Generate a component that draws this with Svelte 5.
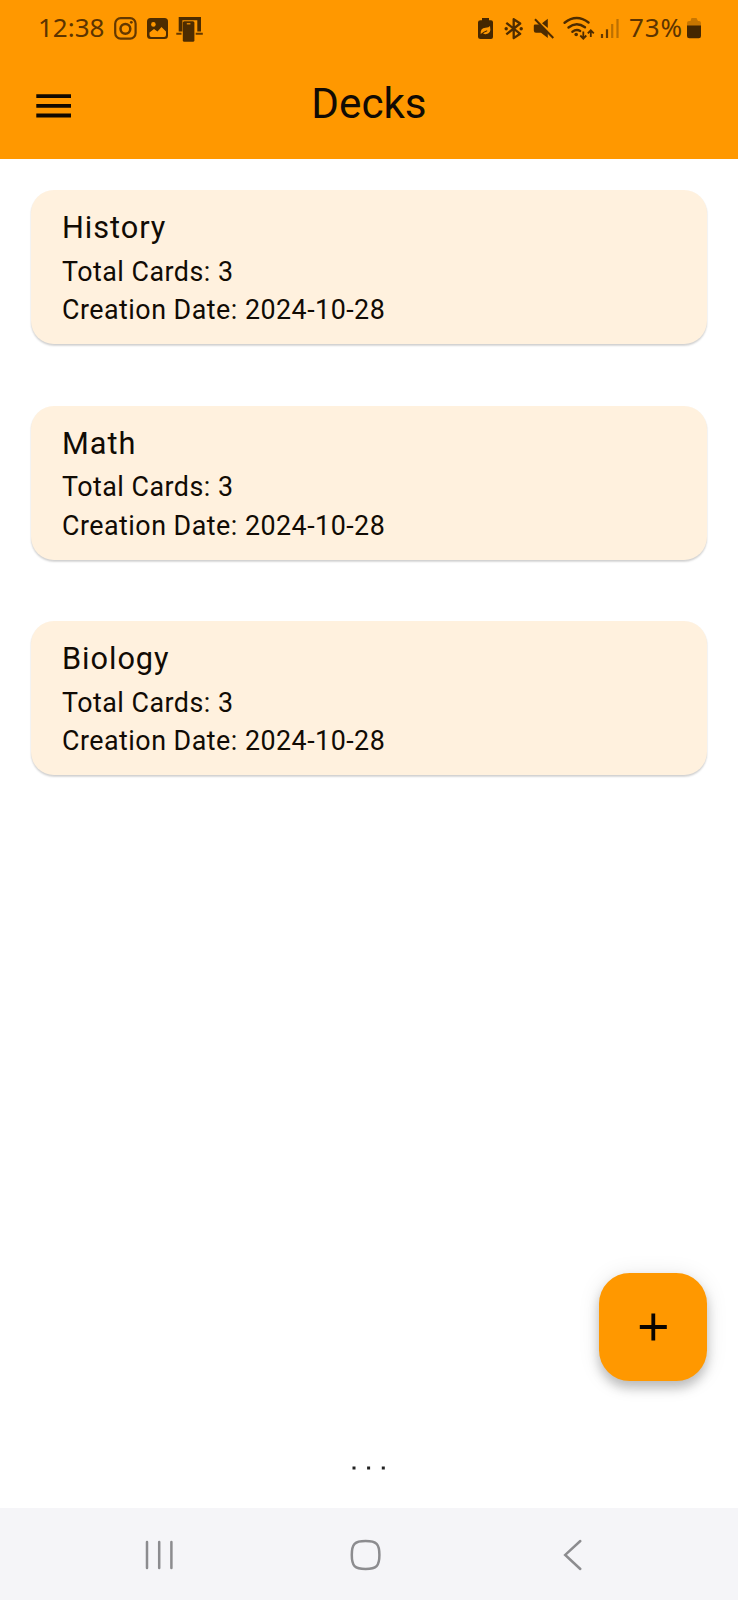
<script>
  const decks = [
    { name: 'History', total: 3, created: '2024-10-28' },
    { name: 'Math', total: 3, created: '2024-10-28' },
    { name: 'Biology', total: 3, created: '2024-10-28' }
  ];
</script>

<div class="screen">
  <header>
    <div class="status">
      <span class="clock">12:38</span>
      <svg class="notifications" width="92" height="28" viewBox="112 14 92 28" aria-hidden="true">
        <g fill="none" stroke="#633800" stroke-width="2.2">
          <rect x="115.2" y="18.2" width="20.4" height="20.4" rx="5.5" />
          <circle cx="125.4" cy="28.8" r="4.9" stroke-width="2.5" />
        </g>
        <circle cx="131.3" cy="22.3" r="1.4" fill="#633800" />
        <rect x="147" y="18" width="21" height="21" rx="3.5" fill="#4d2c00" />
        <circle cx="153.4" cy="24.4" r="2.3" fill="#ff9800" />
        <path d="M149.5 32.5 L154 29 L157.5 31.5 L161.5 27 L166 31.5 V35 Q166 37 164 37 H151.5 Q149.5 37 149.5 35Z" fill="#ff9800" />
        <path d="M178.7 17 H201 V31.5 H197.3 V20.2 H182.4 V31.5 H178.7Z" fill="#4d2c00" />
        <path d="M176.3 33.8 H181.5 M195.7 33.8 H202.8" stroke="#633800" stroke-width="2" />
        <rect x="182.8" y="21.3" width="11.6" height="20.5" rx="1.5" fill="#4d2c00" />
        <path d="M186.8 23.8 H190.4" stroke="#ff9800" stroke-width="1.2" />
      </svg>
      <svg class="indicators" width="146" height="28" viewBox="475 14 146 28" aria-hidden="true">
        <path d="M482 18 H489 V20.2 H491 Q493 20.2 493 22.2 V37 Q493 39 491 39 H480.5 Q478 39 478 37 V22.2 Q478 20.2 480.5 20.2 H482Z" fill="#452700" />
        <path d="M480.7 34.2 Q480 28 485.5 27.8 Q489 27.7 490 26 Q491.7 34 485.5 34.2 Q483.5 34.3 482.5 32.8Z" fill="#ff9800" />
        <path d="M481.2 34.7 Q483 32 487.2 30.8" fill="none" stroke="#452700" stroke-width="1.1" />
        <path d="M506.3 22.8 L520.2 33.8 L513.7 38.1 V19.2 L520.2 23.5 L506.3 34.4" fill="none" stroke="#4d2c00" stroke-width="2.3" stroke-linejoin="round" />
        <circle cx="506.2" cy="28.8" r="1.7" fill="#4d2c00" />
        <circle cx="521.2" cy="28.8" r="1.7" fill="#4d2c00" />
        <path d="M534.5 24.5 H539 L547.8 32 V38 L541 32.7 H536 Q533.8 32.7 533.8 30.5 V25.5ZM542 23.2 L547.8 18.8 V28Z" fill="#4d2c00" />
        <path d="M535 19.3 L553.3 38" stroke="#4d2c00" stroke-width="2" />
        <g fill="none" stroke="#4d2c00" stroke-width="2.4" stroke-linecap="round">
          <path d="M564.6 22.8 Q576.5 13.5 588.5 22.5" />
          <path d="M568.5 27.5 Q576.5 21 585 27.3" />
          <path d="M572.4 31.7 Q576.5 28.8 580.2 31" />
        </g>
        <circle cx="576.2" cy="34.5" r="1.8" fill="#4d2c00" />
        <path d="M583.3 31.5 V38.2 M580.3 35.5 L583.3 38.6 L586.3 35.5 M590.8 37 V30.5 M587.8 33.4 L590.8 30.3 L593.8 33.4" fill="none" stroke="#4d2c00" stroke-width="1.8" />
        <g stroke-width="2.2">
          <path d="M602 34 V38" stroke="#633800" />
          <path d="M607 29.3 V38" stroke="#633800" />
          <path d="M612.2 24 V38" stroke="#bd7000" />
          <path d="M617.5 19 V38" stroke="#bd7000" />
        </g>
      </svg>
      <span class="percent">73%</span>
      <svg class="battery" width="16" height="24" viewBox="686 16 16 24" aria-hidden="true">
        <path d="M687 26 V23 Q687 21 689 21 H690.5 L691.5 18 H696.5 L698 21 H699 Q701 21 701 23 V26Z" fill="#c87600" />
        <path d="M687 25.5 H701 V36 Q701 38.3 698.7 38.3 H689.3 Q687 38.3 687 36Z" fill="#452700" />
      </svg>
    </div>
    <div class="appbar">
      <button class="menu" aria-label="Menu">
        <svg width="36" height="24" viewBox="0 0 36 24"><path d="M.3 2.2 H35 M.3 11.9 H35 M.3 21.5 H35" stroke="#110900" stroke-width="3.8" /></svg>
      </button>
      <h1>Decks</h1>
      <span></span>
    </div>
  </header>

  <main>
    {#each decks as deck}
      <article>
        <h2>{deck.name}</h2>
        <p>Total Cards: {deck.total}</p>
        <p>Creation Date: {deck.created}</p>
      </article>
    {/each}
  </main>

  <div class="actions">
    <button class="fab" aria-label="Add deck">
      <svg width="28" height="28" viewBox="0 0 28 28"><path d="M14.3 .5 V27.5 M.8 14 H27.8" stroke="#0a0500" stroke-width="3.8" /></svg>
    </button>
  </div>
  <div class="dots">
    <svg width="36" height="6" viewBox="0 0 36 6"><path d="M1.5 3 H4.5 M16.1 3 H19.1 M30.8 3 H33.8" stroke="#222" stroke-width="3" /></svg>
  </div>

  <nav>
    <svg width="30" height="32" viewBox="0 0 30 32"><path d="M3 3 V29 M15.2 3 V29 M27.4 3 V29" /></svg>
    <svg width="32" height="32" viewBox="0 0 32 32"><path d="M15.6 2.1 C26.6 2.1 29.4 5 29.4 16 S26.6 29.9 15.6 29.9 S1.8 27 1.8 16 S4.6 2.1 15.6 2.1Z" /></svg>
    <svg width="20" height="32" viewBox="0 0 20 32"><path d="M17.3 2 L2.2 15.9 L17.3 30" /></svg>
  </nav>
</div>

<style>
  :global(body) { margin: 0; background: #fff; }
  .screen {
    display: flex;
    flex-direction: column;
    width: 738px;
    height: 1600px;
    background: #fff;
    color: #110b04;
    font-family: Roboto, sans-serif;
    overflow: hidden;
  }
  header { height: 158.5px; background: #ff9800; flex: none; }
  button { border: 0; padding: 0; background: none; }
  svg { display: block; flex: none; }
  .status {
    display: flex;
    align-items: center;
    height: 56px;
    padding-left: 38px;
    font: 26px/54px "Noto Sans", sans-serif;
    color: #5c3400;
  }
  .clock { width: 74px; }
  .clock, .percent { margin-top: -2px; }
  .indicators { margin-left: 271px; }
  .percent { width: 57px; margin-left: 8px; letter-spacing: .9px; }
  .appbar {
    display: grid;
    grid-template-columns: 1fr auto 1fr;
    align-items: center;
    height: 96px;
    padding: 0 36px;
  }
  .menu { width: 36px; margin-top: 3px; }
  h1 { margin: 0; font-size: 42.2px; font-weight: 400; line-height: 54px; }
  main { display: flex; flex-direction: column; gap: 61.5px; padding: 31.5px 31px 0 30.5px; flex: 1; }
  article {
    height: 154px;
    box-sizing: border-box;
    padding: 15.1px 31.5px;
    border-radius: 23px;
    background: #fff1de;
    box-shadow: 0 2px 2px rgba(0, 0, 0, .14), 0 1px 2px rgba(0, 0, 0, .06);
  }
  h2 { margin: 0 0 1.6px; font-size: 30.7px; font-weight: 400; line-height: 46px; letter-spacing: .96px; }
  p { margin: 0; font-size: 26.84px; line-height: 38.6px; letter-spacing: .49px; }
  .actions { display: flex; justify-content: flex-end; padding-right: 31px; }
  .fab {
    display: grid;
    place-items: center;
    width: 107.6px;
    height: 108px;
    border-radius: 30.7px;
    background: #ff9800;
    box-shadow: 0 7px 11px rgba(0, 0, 0, .22), 0 2px 22px rgba(0, 0, 0, .1);
  }
  .dots { display: flex; justify-content: center; height: 43px; padding: 84px 1px 0 0; }
  nav {
    display: flex;
    align-items: center;
    height: 92px;
    box-sizing: border-box;
    padding: 2px 0 0 144px;
    background: #f5f5f8;
    flex: none;
  }
  nav svg { fill: none; stroke: #8c8c8f; stroke-width: 2.5; stroke-linecap: round; }
  nav svg:nth-child(2) { margin-left: 175.5px; }
  nav svg:nth-child(3) { margin-left: 181.5px; }
</style>
